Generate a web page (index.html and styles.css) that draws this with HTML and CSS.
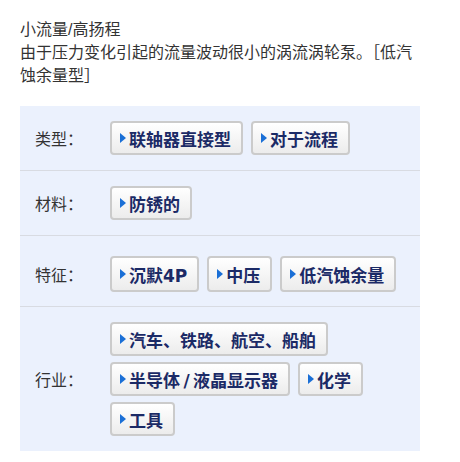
FILE: index.html
```html
<!DOCTYPE html>
<html lang="zh-CN">
<head>
  <meta charset="UTF-8" />
  <meta name="viewport" content="width=device-width, initial-scale=1.0"/>
  <title>小流量/高扬程</title>
  <link rel="stylesheet" href="styles.css">
</head>
<body>
  <div class="container">
    <p class="intro">小流量/高扬程<br>由于压力变化引起的流量波动很小的涡流涡轮泵。［低汽蚀余量型］</p>

    <div class="spec">
      <div class="spec-row">
        <div class="spec-label">类型：</div>
        <div class="tags">
          <a class="tag" href="#">联轴器直接型</a>
          <a class="tag" href="#">对于流程</a>
        </div>
      </div>
      <div class="spec-row">
        <div class="spec-label">材料：</div>
        <div class="tags">
          <a class="tag" href="#">防锈的</a>
        </div>
      </div>
      <div class="spec-row spec-row-tall">
        <div class="spec-label">特征：</div>
        <div class="tags">
          <a class="tag" href="#">沉默4P</a>
          <a class="tag" href="#">中压</a>
          <a class="tag" href="#">低汽蚀余量</a>
        </div>
      </div>
      <div class="spec-row">
        <div class="spec-label">行业：</div>
        <div class="tags">
          <a class="tag" href="#">汽车、铁路、航空、船舶</a>
          <a class="tag" href="#">半导体&thinsp;/&thinsp;液晶显示器</a>
          <a class="tag" href="#">化学</a>
          <a class="tag" href="#">工具</a>
        </div>
      </div>
    </div>
  </div>
</body>
</html>
```

FILE: styles.css
```css
body {
  font-family: "Liberation Sans", "Noto Sans CJK SC", sans-serif;
  color: #333;
  background: #fff;
  margin: 0;
  padding: 0;
}
.container {
  width: 400px;
  padding: 18px 20px;
}
.intro {
  margin: 0;
  font-size: 16px;
  line-height: 23px;
}
.spec {
  margin-top: 19px;
  background: #ebf1fd;
}
.spec-row {
  display: flex;
  align-items: center;
  padding: 15px 0;
  border-top: 1px solid #d8dbe2;
}
.spec-row:first-child {
  border-top: none;
}
.spec-row-tall {
  padding: 20px 0 14px;
}
.spec-row-tall .tag {
  height: 32px;
}
.spec-label {
  width: 75px;
  padding-left: 15px;
  flex-shrink: 0;
  font-size: 16px;
}
.tags {
  display: flex;
  flex-wrap: wrap;
  gap: 6px 8px;
  flex: 1;
}
.tag {
  display: inline-flex;
  align-items: center;
  height: 30px;
  padding: 0 10px 0 8px;
  border: 2px solid #cbcbcb;
  border-radius: 4px;
  background: linear-gradient(#ffffff, #ececec);
  color: #1b2a66;
  font-family: "DejaVu Sans", "Noto Sans CJK SC", sans-serif;
  font-size: 17px;
  font-weight: bold;
  text-decoration: none;
  white-space: nowrap;
}
.tag::before {
  content: "";
  width: 0;
  height: 0;
  margin-right: 3px;
  border-top: 5px solid transparent;
  border-bottom: 5px solid transparent;
  border-left: 6px solid #1a6fd6;
}
```
